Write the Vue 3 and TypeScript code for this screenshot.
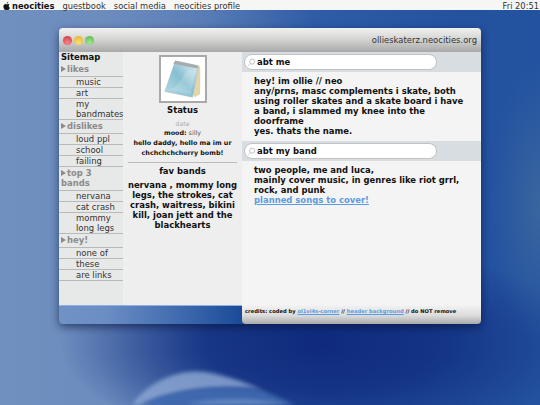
<script setup lang="ts">
interface NavGroup {
  title: string
  links: string[]
}

const navGroups: NavGroup[] = [
  { title: 'likes', links: ['music', 'art', 'my bandmates'] },
  { title: 'dislikes', links: ['loud ppl', 'school', 'failing'] },
  { title: 'top 3 bands', links: ['nervana', 'cat crash', 'mommy long legs'] },
  { title: 'hey!', links: ['none of', 'these', 'are links'] },
]
</script>

<template>
  <div class="desktop">
    <svg class="swoosh" viewBox="0 0 540 405">
      <defs>
        <filter id="soft" x="-20%" y="-40%" width="140%" height="180%">
          <feGaussianBlur stdDeviation="2" />
        </filter>
      </defs>
      <path d="M132 405 C145 385 175 368 205 372 C225 375 245 382 262 390 C225 385 175 388 140 405 Z" fill="#8aa5d2" opacity="0.85" filter="url(#soft)" />
      <path d="M140 405 C175 388 225 385 262 390 C275 396 285 400 295 405 Z" fill="#3f6bb0" opacity="0.9" filter="url(#soft)" />
      <path d="M185 405 C205 398 250 396 290 405 Z" fill="#6d8fc6" opacity="0.8" filter="url(#soft)" />
    </svg>

    <header class="menubar">
      <nav class="menu-left">
        <svg class="apple" viewBox="0 0 12 14">
          <path d="M8 0.500C8 2 6.900 3.200 5.800 3.200C5.700 1.900 6.800 0.700 8 0.500ZM9.900 4.800C8.900 5.400 8.500 6.300 8.600 7.300C8.700 8.400 9.400 9.200 10.400 9.600C9.900 11.100 8.800 13.100 7.600 13.100C6.900 13.100 6.500 12.700 5.700 12.700C4.900 12.700 4.500 13.100 3.800 13.100C2.400 13.100 0.600 10.300 0.600 7.800C0.600 5.300 2.200 4 3.700 4C4.500 4 5.100 4.500 5.700 4.500C6.300 4.500 7 4 7.900 4C8.700 4 9.400 4.300 9.900 4.800Z" />
        </svg>
        <b class="brand">neocities</b>
        <span>guestbook</span>
        <span>social media</span>
        <span>neocities profile</span>
      </nav>
      <span>Fri 20:51</span>
    </header>

    <main class="window">
      <div class="titlebar">
        <div class="lights">
          <i class="light red"></i>
          <i class="light yellow"></i>
          <i class="light green"></i>
        </div>
        <span class="site">ollieskaterz.neocities.org</span>
      </div>

      <div class="panes">
        <aside class="sidebar">
          <h2>Sitemap</h2>
          <section v-for="group in navGroups" :key="group.title">
            <h3><span class="arrow"></span>{{ group.title }}</h3>
            <ul>
              <li v-for="link in group.links" :key="link">{{ link }}</li>
            </ul>
          </section>
        </aside>

        <section class="status">
          <div class="photo">
            <svg viewBox="0 0 44 44" width="42" height="42">
              <defs>
                <linearGradient id="pad" x1="0" y1="1" x2="1" y2="0">
                  <stop offset="0" stop-color="#b9dde6" />
                  <stop offset="0.5" stop-color="#86bfd2" />
                  <stop offset="1" stop-color="#e6f2f5" />
                </linearGradient>
              </defs>
              <path d="M16 4 L40 9 L40 38 L34 41 Z" fill="#e2d5ab" />
              <path d="M14 3 L38 8 L32 41 L3 35 Z" fill="url(#pad)" stroke="#a3bac2" stroke-width="0.6" />
              <path d="M14 3 L38 8 L37 11 L12 6 Z" fill="#a6abad" />
              <path d="M8 33 C18 29 22 20 26 12 L35 14 L30 38 Z" fill="#ffffff" opacity="0.18" />
            </svg>
          </div>
          <h2>Status</h2>
          <p class="date">date</p>
          <p class="mood"><b>mood:</b> silly</p>
          <p class="song">hello daddy, hello ma im ur chchchchcherry bomb!</p>
          <hr />
          <h2 class="bands-title">fav bands</h2>
          <p class="bands">nervana , mommy long legs, the strokes, cat crash, waitress, bikini kill, joan jett and the blackhearts</p>
        </section>

        <section class="content">
          <div class="searchbar">
            <div class="pill">
              <svg class="lens" viewBox="0 0 10 10">
                <circle cx="5.800" cy="4" r="2.800" />
                <path d="M3.800 6 L1.500 8.500" />
              </svg>
              abt me
            </div>
          </div>
          <div class="copy">
            hey! im ollie // neo<br />
            any/prns, masc complements i skate, both using roller skates and a skate board i have a band, i slammed my knee into the doorframe<br />
            yes. thats the name.
          </div>
          <div class="searchbar">
            <div class="pill">
              <svg class="lens" viewBox="0 0 10 10">
                <circle cx="5.800" cy="4" r="2.800" />
                <path d="M3.800 6 L1.500 8.500" />
              </svg>
              abt my band
            </div>
          </div>
          <div class="copy">
            two people, me and luca,<br />
            mainly cover music, in genres like riot grrl, rock, and punk<br />
            <a>planned songs to cover!</a>
          </div>
        </section>
      </div>

      <div class="footer">
        <div class="footer-blue"></div>
        <div class="credits">
          credits: coded by <a>ol1vi4s-corner</a> // <a>header background</a> // do NOT remove
        </div>
      </div>
    </main>
  </div>
</template>

<style>
html,
body {
  margin: 0;
  overflow: hidden;
}
</style>

<style scoped>
* {
  box-sizing: border-box;
}

.desktop {
  position: relative;
  width: 540px;
  height: 405px;
  overflow: hidden;
  font-family: 'DejaVu Sans', sans-serif;
  color: #111;
  background:
    radial-gradient(ellipse 260px 105px at 320px 345px, #0f2a7c 0%, rgba(18, 48, 130, 0.9) 45%, rgba(20, 60, 140, 0) 100%),
    radial-gradient(ellipse 50px 140px at 540px 205px, #3a659f 0%, rgba(58, 101, 159, 0) 100%),
    linear-gradient(90deg, #7090c0 0%, #6c8cbe 20%, #587db6 38%, #2f5ca6 58%, #24529f 85%, #2353a0 100%);
}

.swoosh {
  position: absolute;
  inset: 0;
  width: 100%;
  height: 100%;
}

.menubar {
  position: relative;
  height: 10px;
  display: flex;
  justify-content: space-between;
  align-items: flex-start;
  padding: 1px 1px 0 3px;
  background: #f6f6f4;
  font-size: 8.300px;
  line-height: 10px;
  color: #333;
  white-space: nowrap;
}

.menu-left {
  display: flex;
  align-items: center;
  gap: 8px;
}

.apple {
  width: 8px;
  height: 10px;
  fill: #111;
  margin: -1px -7px 0 0;
}

.brand {
  color: #111;
}

.window {
  position: relative;
  width: 422px;
  height: 296px;
  margin: 18px 0 0 59px;
  display: flex;
  flex-direction: column;
  border-radius: 4px;
  overflow: hidden;
  box-shadow: 0 3px 9px rgba(5, 15, 50, 0.6);
}

.titlebar {
  height: 24px;
  display: flex;
  align-items: center;
  justify-content: space-between;
  padding: 0 4px;
  background: linear-gradient(#f1f1f0 0%, #d6d6d5 45%, #a8a8a8 100%);
}

.lights {
  display: flex;
  gap: 2px;
}

.light {
  width: 9px;
  height: 9px;
  border-radius: 50%;
}

.red {
  background: radial-gradient(circle at 50% 75%, #f5858a, #d22f3a);
}

.yellow {
  background: radial-gradient(circle at 50% 75%, #fbe07c, #e3ad22);
}

.green {
  background: radial-gradient(circle at 50% 75%, #a4e894, #54b648);
}

.site {
  font-size: 8.450px;
  color: #333;
}

.panes {
  flex: 1;
  min-height: 0;
  display: grid;
  grid-template-columns: 64px 119px 239px;
}

.sidebar {
  background: #e7e8e8;
}

.sidebar h2 {
  margin: 0;
  padding-left: 2px;
  font-size: 8.450px;
  line-height: 11px;
}

.sidebar h3 {
  margin: 0;
  padding: 1px 0 2px 2px;
  font-size: 8.450px;
  line-height: 10px;
  color: #8b8b8b;
}

.arrow {
  display: inline-block;
  width: 0;
  height: 0;
  margin-right: 1px;
  border-left: 5px solid #8b8b8b;
  border-top: 3px solid transparent;
  border-bottom: 3px solid transparent;
}

.sidebar ul {
  list-style: none;
  margin: 0;
  padding: 0;
}

.sidebar li {
  padding-left: 17px;
  border-top: 1px solid #b9b9b9;
  font-size: 8.450px;
  line-height: 10px;
  color: #333;
}

.sidebar li:last-child {
  border-bottom: 1px solid #b9b9b9;
}

.status {
  background: #eeeeee;
  padding: 3px 3px 0;
  text-align: center;
}

.photo {
  width: 48px;
  height: 48px;
  margin: 0 auto;
  display: flex;
  align-items: center;
  justify-content: center;
  background: #fff;
  border: 2px solid #a9a9a9;
}

.status h2 {
  margin: 2px 0 0;
  font-size: 8.450px;
  line-height: 11px;
}

.date {
  margin: 3px 0 0;
  font-size: 6.200px;
  line-height: 9px;
  color: #aaa;
}

.mood {
  margin: 0;
  font-size: 6.400px;
  line-height: 10px;
  color: #555;
}

.mood b {
  color: #111;
}

.song {
  margin: 0;
  padding: 0 2px;
  font-size: 6.400px;
  font-weight: 700;
  line-height: 10px;
}

hr {
  margin: 4px 2px 0;
  border: 0;
  border-top: 1px solid #bcbcbc;
}

.status .bands-title {
  margin-top: 3px;
}

.bands {
  margin: 3px 0 0;
  font-size: 8.450px;
  font-weight: 700;
  line-height: 10px;
}

.content {
  background: #f4f4f4;
}

.searchbar {
  height: 20px;
  padding: 2px 0 0 2px;
  background: #d8dde1;
}

.pill {
  display: flex;
  align-items: center;
  gap: 1px;
  width: 193px;
  height: 16px;
  padding-left: 2px;
  border-radius: 8px;
  border: 1px solid #c2c2c2;
  background: #fff;
  font-size: 8.450px;
  font-weight: 700;
}

.lens {
  width: 9px;
  height: 9px;
  fill: none;
  stroke: #b4b4b4;
  stroke-width: 0.9;
}

.copy {
  padding: 4px 12px 5px;
  font-size: 8.450px;
  font-weight: 700;
  line-height: 10px;
}

a {
  color: #5d9be0;
  text-decoration: underline;
}

.footer {
  height: 19px;
  display: flex;
  background: #17478f;
}

.footer-blue {
  width: 183px;
  border-top: 1px solid #8fb0e0;
  background: linear-gradient(90deg, #7092c6 0%, #6b8ec4 25%, #4670b2 60%, #1a4a98 100%);
}

.credits {
  flex: 1;
  padding: 2px 0 0 3px;
  border-bottom-left-radius: 4px;
  background: linear-gradient(#f3f3f3 0%, #dcdcdc 55%, #a9a9a9 100%);
  font-size: 5.200px;
  font-weight: 700;
  line-height: 9px;
  white-space: nowrap;
}
</style>
